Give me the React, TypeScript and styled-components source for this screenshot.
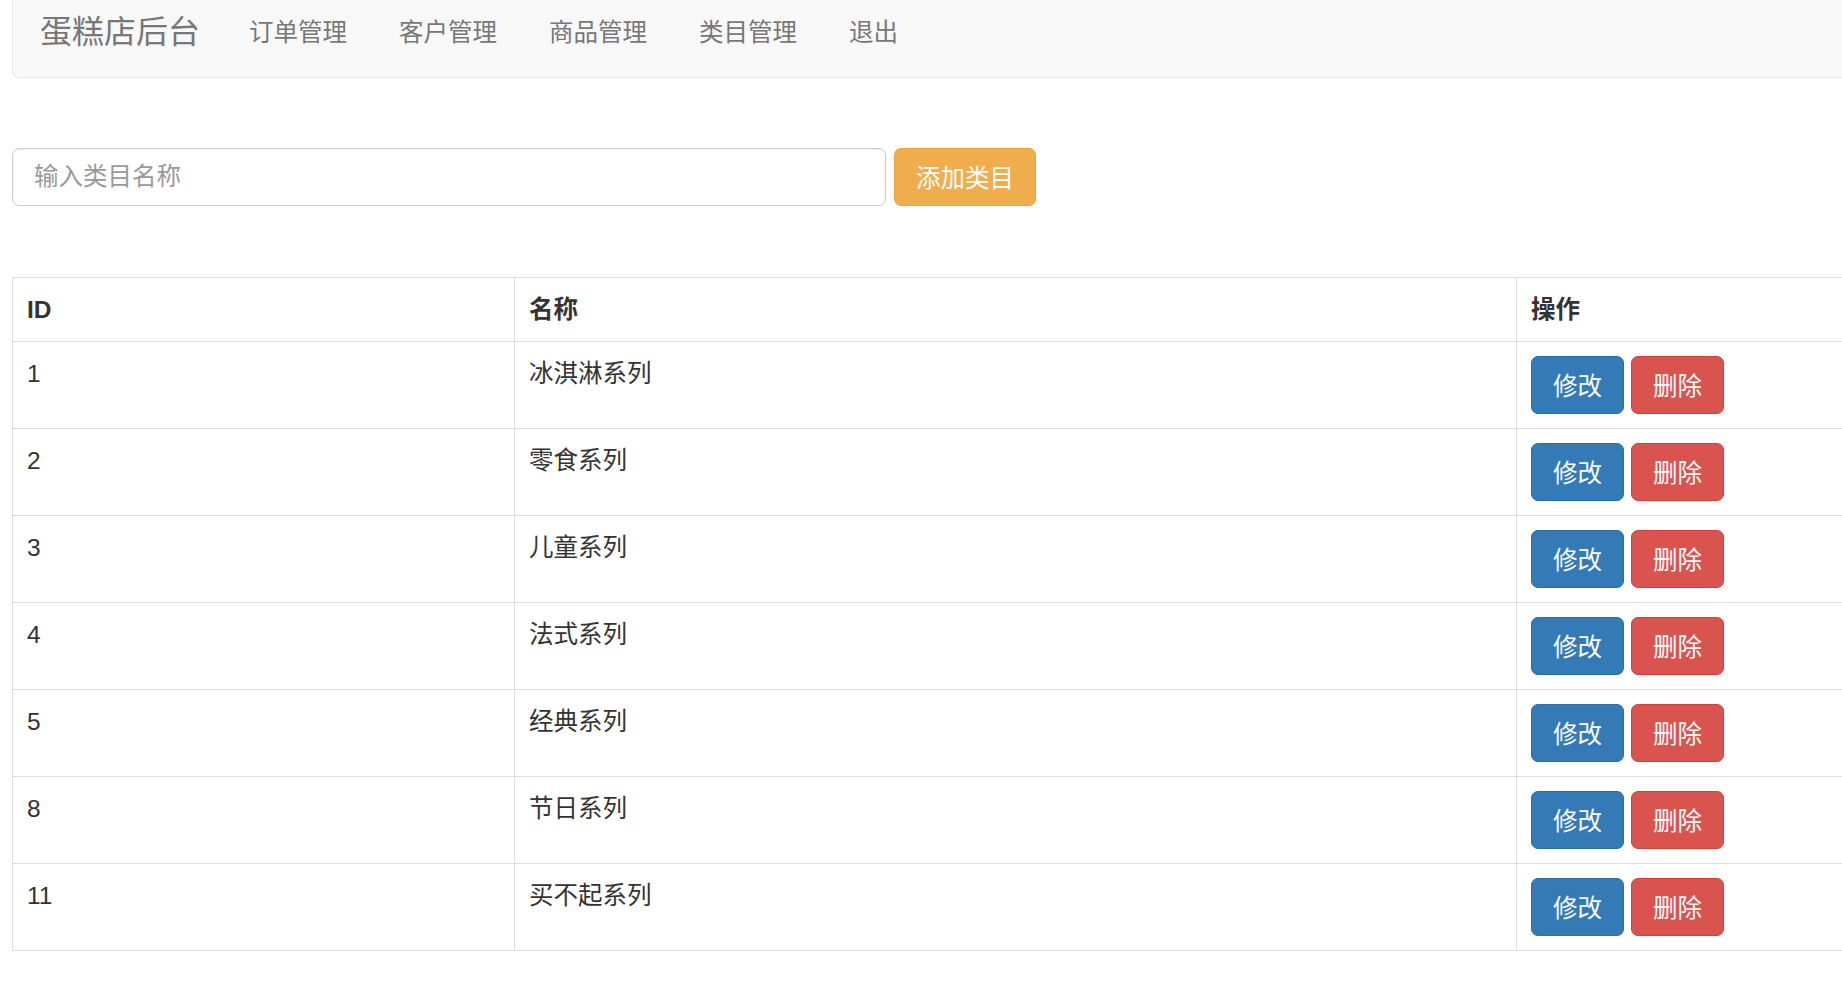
import styled, { createGlobalStyle } from "styled-components";

const GlobalStyle = createGlobalStyle`
  html, body {
    margin: 0;
    padding: 0;
    overflow: hidden;
    background: #fff;
  }
  body {
    font-family: "Liberation Sans", "Noto Sans CJK SC", sans-serif;
    color: #333;
  }
  * {
    box-sizing: border-box;
  }
`;

const categories = [
  { id: 1, name: "冰淇淋系列" },
  { id: 2, name: "零食系列" },
  { id: 3, name: "儿童系列" },
  { id: 4, name: "法式系列" },
  { id: 5, name: "经典系列" },
  { id: 8, name: "节日系列" },
  { id: 11, name: "买不起系列" },
];

const navLinks = ["订单管理", "客户管理", "商品管理", "类目管理", "退出"];

const App = () => {
  return (
    <>
      <GlobalStyle />
      <Page>
        <Navbar>
          <Brand>蛋糕店后台</Brand>
          <NavList>
            {navLinks.map((link) => (
              <NavItem key={link}>{link}</NavItem>
            ))}
          </NavList>
        </Navbar>

        <AddForm>
          <NameInput placeholder="输入类目名称" />
          <Button $variant="warning" $width={142}>
            添加类目
          </Button>
        </AddForm>

        <Table>
          <colgroup>
            <col style={{ width: 502 }} />
            <col style={{ width: 1002 }} />
            <col />
          </colgroup>
          <thead>
            <tr>
              <Th>ID</Th>
              <Th>名称</Th>
              <Th>操作</Th>
            </tr>
          </thead>
          <tbody>
            {categories.map((item) => (
              <tr key={item.id}>
                <Td>{item.id}</Td>
                <Td>{item.name}</Td>
                <Td>
                  <Actions>
                    <Button $variant="primary" $width={93}>
                      修改
                    </Button>
                    <Button $variant="danger" $width={93}>
                      删除
                    </Button>
                  </Actions>
                </Td>
              </tr>
            ))}
          </tbody>
        </Table>
      </Page>
    </>
  );
};

const colors = {
  primary: { bg: "#337ab7", border: "#2e6da4" },
  danger: { bg: "#d9534f", border: "#d43f3a" },
  warning: { bg: "#f0ad4e", border: "#eea236" },
};

// 화면 오른쪽으로 잘린 레이아웃이라 오른쪽 테두리는 그리지 않음
const Page = styled.div`
  width: 100%;
  padding-left: 12px;
`;

const Navbar = styled.nav`
  display: flex;
  align-items: center;

  height: 78px;
  padding-bottom: 12px;

  background-color: #f8f8f8;
  border-left: 1px solid #e7e7e7;
  border-bottom: 1px solid #e7e7e7;
  border-radius: 0 0 0 7px;
`;

const Brand = styled.div`
  padding: 0 23px 0 27px;
  font-size: 32px;
  line-height: 35px;
  color: #777;
`;

const NavList = styled.ul`
  display: flex;
  margin: 0;
  padding: 0;
  list-style: none;
`;

const NavItem = styled.li`
  padding: 0 26px;
  font-size: 24.5px;
  line-height: 35px;
  color: #777;
`;

const AddForm = styled.div`
  display: flex;
  gap: 8px;
  margin-top: 70px;
`;

const NameInput = styled.input`
  width: 874px;
  height: 58px;
  padding: 0 21px;

  font-family: "Liberation Sans", "Noto Sans CJK SC", sans-serif;
  font-size: 24.5px;
  color: #555;

  border: 1px solid #ccc;
  border-radius: 7px;
  box-shadow: inset 0 1px 2px rgba(0, 0, 0, 0.075);
  outline: none;

  &::placeholder {
    color: #999;
  }
`;

const Button = styled.button<{ $variant: keyof typeof colors; $width: number }>`
  display: flex;
  align-items: center;
  justify-content: center;

  width: ${({ $width }) => $width}px;
  height: 58px;
  padding: 0 0 2px;

  font-family: "Liberation Sans", "Noto Sans CJK SC", sans-serif;
  font-size: 24.5px;
  color: #fff;

  background-color: ${({ $variant }) => colors[$variant].bg};
  border: 1px solid ${({ $variant }) => colors[$variant].border};
  border-radius: 7px;
  cursor: pointer;
`;

const Table = styled.table`
  width: 100%;
  margin-top: 71px;
  border-collapse: collapse;
  table-layout: fixed;
  border: 1px solid #ddd;
  border-right: none;
`;

const Th = styled.th`
  height: 64px;
  padding: 14px;
  text-align: left;
  font-size: 24.5px;
  font-weight: 700;
  line-height: 35px;
  color: #333;
  border: 1px solid #ddd;

  &:last-child {
    border-right: none;
  }
`;

const Td = styled.td`
  height: 87px;
  padding: 14px;
  vertical-align: top;
  font-size: 24.5px;
  line-height: 35px;
  color: #333;
  border: 1px solid #ddd;

  &:last-child {
    border-right: none;
  }
`;

const Actions = styled.div`
  display: flex;
  gap: 7px;
`;

export default App;
